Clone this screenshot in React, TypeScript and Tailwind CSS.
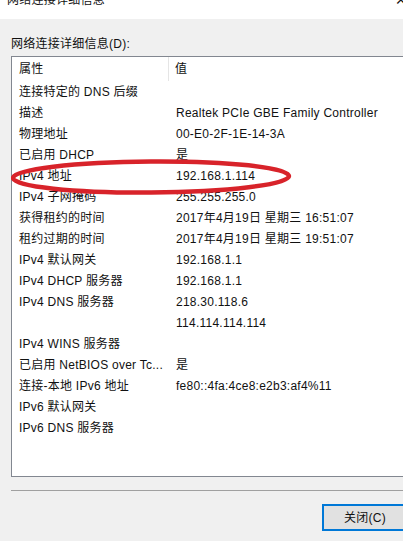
import React from "react";

const rows: [string, string][] = [
  ["连接特定的 DNS 后缀", ""],
  ["描述", "Realtek PCIe GBE Family Controller"],
  ["物理地址", "00-E0-2F-1E-14-3A"],
  ["已启用 DHCP", "是"],
  ["IPv4 地址", "192.168.1.114"],
  ["IPv4 子网掩码", "255.255.255.0"],
  ["获得租约的时间", "2017年4月19日 星期三 16:51:07"],
  ["租约过期的时间", "2017年4月19日 星期三 19:51:07"],
  ["IPv4 默认网关", "192.168.1.1"],
  ["IPv4 DHCP 服务器", "192.168.1.1"],
  ["IPv4 DNS 服务器", "218.30.118.6"],
  ["", "114.114.114.114"],
  ["IPv4 WINS 服务器", ""],
  ["已启用 NetBIOS over Tc...", "是"],
  ["连接-本地 IPv6 地址", "fe80::4fa:4ce8:e2b3:af4%11"],
  ["IPv6 默认网关", ""],
  ["IPv6 DNS 服务器", ""],
];

export default function App() {
  return (
    <div
      className="relative flex h-[541px] w-[403px] flex-col overflow-hidden bg-[#f0f0f0] text-[12px] tracking-[0.25px] text-[#111]"
      style={{ fontFamily: '"Liberation Sans", "Noto Sans CJK SC", sans-serif' }}
    >
      {/* title bar, cut off at the top */}
      <div className="relative h-[19px] shrink-0 bg-white">
        <div className="absolute left-[7px] top-[-9px] leading-[18px]">网络连接详细信息</div>
        <div className="absolute right-[-4px] top-[-7px] text-[14px] leading-[14px]">✕</div>
      </div>

      <div className="pl-[11px] pt-[17px] leading-[16px]">网络连接详细信息(D):</div>

      <div className="relative ml-[11px] mt-[4px] mr-[-20px] h-[421px] shrink-0 border border-[#828790] bg-white">
        <div className="flex h-[24px] items-center">
          <div className="flex h-full w-[157px] items-center border-r border-[#e5e5e5] pl-[7px]">属性</div>
          <div className="pl-[6px]">值</div>
        </div>
        <div className="flex flex-col">
          {rows.map(([k, v], i) => (
            <div key={i} className="flex h-[21px] items-center whitespace-nowrap">
              <div className="w-[157px] pl-[7px]">{k}</div>
              <div className="pl-[7px]">{v}</div>
            </div>
          ))}
        </div>

        {/* red marker ring around the IPv4 row */}
        <svg
          className="pointer-events-none absolute left-[-1px] top-[101px]"
          width="300"
          height="40"
          viewBox="0 0 300 40"
        >
          <ellipse
            cx="140"
            cy="19"
            rx="138"
            ry="15.5"
            fill="none"
            stroke="#d8232a"
            strokeWidth="4.5"
            transform="rotate(-0.4 140 19)"
          />
        </svg>
      </div>

      <div className="ml-[11px] mt-[13px] h-px shrink-0 bg-[#a0a0a0]" />

      <div className="flex justify-end pt-[13px]">
        <button className="mr-[-5px] h-[27px] w-[86px] border-2 border-[#0078d7] bg-[#e1e1e1] text-center text-[12px]">
          关闭(C)
        </button>
      </div>
    </div>
  );
}
